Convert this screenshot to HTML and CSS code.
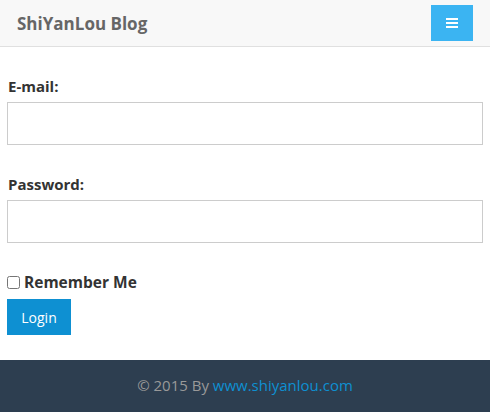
FILE: index.html
```html
<!DOCTYPE html>
<html lang="en">
<head>
    <meta charset="UTF-8">
    <meta name="viewport" content="width=device-width, initial-scale=1.0">
    <title>ShiYanLou Blog - Login</title>
    <link rel="stylesheet" href="styles.css">
</head>
<body>
    <header class="topbar">
        <h1 class="brand">ShiYanLou Blog</h1>
        <button class="menu-toggle" aria-label="Menu">
            <span class="bar"></span>
            <span class="bar"></span>
            <span class="bar"></span>
        </button>
    </header>

    <form class="login-form">
        <div class="field">
            <label for="email">E-mail:</label>
            <input type="email" id="email" class="text-input">
        </div>
        <div class="field">
            <label for="password">Password:</label>
            <input type="password" id="password" class="text-input">
        </div>
        <label class="remember">
            <input type="checkbox" class="check"> Remember Me
        </label>
        <button type="submit" class="btn-login">Login</button>
    </form>

    <footer class="footer">
        <p>&copy; 2015 By <a href="#">www.shiyanlou.com</a></p>
    </footer>
</body>
</html>
```

FILE: styles.css
```css
body {
    margin: 0;
    font-family: "Open Sans", "Noto Sans", Arial, sans-serif;
    color: #333;
    background: #fff;
}
.topbar {
    height: 46px;
    background: #f8f8f8;
    border-bottom: 1px solid #e0e0e0;
    display: flex;
    align-items: center;
    justify-content: space-between;
    padding: 0 17px;
}
.brand {
    margin: 0;
    font-size: 17px;
    font-weight: bold;
    color: #666;
}
.menu-toggle {
    width: 42px;
    height: 36px;
    background: #3bb4f2;
    border: none;
    display: flex;
    flex-direction: column;
    align-items: center;
    justify-content: center;
    gap: 2px;
    padding: 0;
}
.bar {
    display: block;
    width: 12px;
    height: 2px;
    background: #fff;
}
.login-form {
    padding: 28px 7px 25px;
}
.field {
    margin-bottom: 28px;
}
.field label {
    display: block;
    font-size: 15px;
    font-weight: bold;
    margin: 0 0 5px 1px;
    line-height: 22px;
}
.text-input {
    display: block;
    box-sizing: border-box;
    width: 100%;
    height: 43px;
    border: 1px solid #ccc;
    margin: 0;
}
.remember {
    display: flex;
    align-items: center;
    gap: 4px;
    font-size: 15.5px;
    font-weight: bold;
    line-height: 22px;
    margin: 0 0 6px;
}
.check {
    margin: 0;
    width: 13px;
    height: 13px;
}
.btn-login {
    background: #0e90d2;
    color: #fff;
    border: none;
    width: 64px;
    height: 36px;
    font-family: inherit;
    font-size: 14px;
}
.footer {
    background: #2d3e50;
    height: 53px;
    display: flex;
    align-items: center;
    justify-content: center;
}
.footer p {
    margin: 0 0 4px;
    color: #999;
    font-size: 15px;
}
.footer a {
    color: #0e90d2;
    text-decoration: none;
}
```
